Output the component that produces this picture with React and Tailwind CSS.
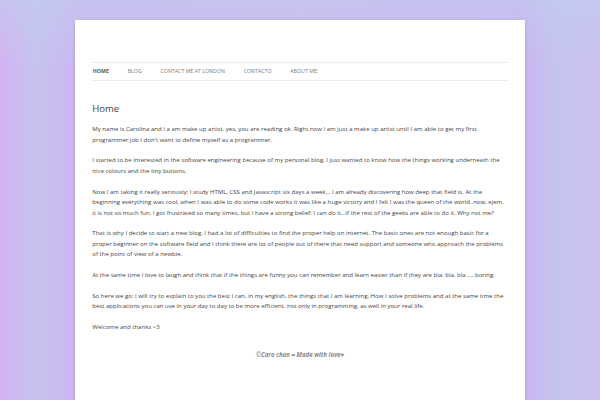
import React from "react";

const paragraphs = [
  "My name is Carolina and I a am make up artist, yes, you are reading ok. Right now I am just a make up artist until I am able to get my first programmer job I don't want to define myself as a programmer.",
  "I started to be interested in the software engineering because of my personal blog, I just wanted to know how the things working underneath the nice colours and the tiny buttons.",
  "Now I am taking it really seriously; I study HTML, CSS and Javascript six days a week… I am already discovering how deep that field is. At the beginning everything was cool, when I was able to do some code works it was like a huge victory and I felt I was the queen of the world..now, ejem, it is not so much fun.  I got frustrated so many times, but I have a strong belief: I can do it…if the rest of the geeks are able to do it. Why not me?",
  "That is why I decide to start a new blog, I had a lot of difficulties to find the proper help on internet. The basic ones are not enough basic for a proper beginner on the software field and I think there are lot of people out of there that need support and someone who approach the problems of the point of view of a newbie.",
  "At the same time I love to laugh and think that if the things are funny you can remember and learn easier than if they are bla, bla, bla …. boring.",
  "So here we go: I will try to explain to you the best I can, in my english, the things that I am learning, How I solve problems and at the same time the best applications you can use in your day to day to be more efficient, not only in programming, as well in your real life.",
  "Welcome and thanks <3",
];

const nav = ["Home", "Blog", "Contact me at London", "Contacto", "About me:"];

export default function App() {
  return (
    <div className="min-h-[400px] pt-[20px] font-['Open_Sans',sans-serif] bg-[linear-gradient(180deg,rgba(192,206,240,0.55)_0px,rgba(192,206,240,0)_70px),linear-gradient(90deg,#d3b3f2_0%,#c6c3ef_6%,#cbb9f1_11%,#ceb4f1_13%,#cfb8f1_50%,#cbb3f1_87%,#c5c4ef_93%,#ccc0ef_100%)]">
      <div className="mx-auto min-h-[380px] w-[450px] bg-white px-[17.3px] pt-[42px] shadow-[0_1px_3px_rgba(100,100,100,0.3)]">
        <nav className="flex h-[19px] items-center gap-[18.8px] border-y border-[#ededed] pl-[0.5px] text-[5.25px] uppercase">
          {nav.map((n, i) => (
            <span
              key={n}
              className={i === 0 ? "font-bold text-[#555]" : "text-[#7a7a7a]"}
            >
              {n}
            </span>
          ))}
        </nav>
        <h1 className="mt-[21.7px] text-[9.5px] leading-[11.4px] text-[#444]">Home</h1>
        <div className="mt-[10.2px] text-[6.06px] leading-[10.4px] text-[#444]">
          {paragraphs.map((p, i) => (
            <p key={i} className="mb-[10.4px]">
              {p}
            </p>
          ))}
        </div>
        <footer className="mt-[18px] text-center text-[6.1px] font-bold italic leading-[10.4px] text-[#8a8a8a]">
          ©Caro chan = Made with love♥
        </footer>
      </div>
    </div>
  );
}
